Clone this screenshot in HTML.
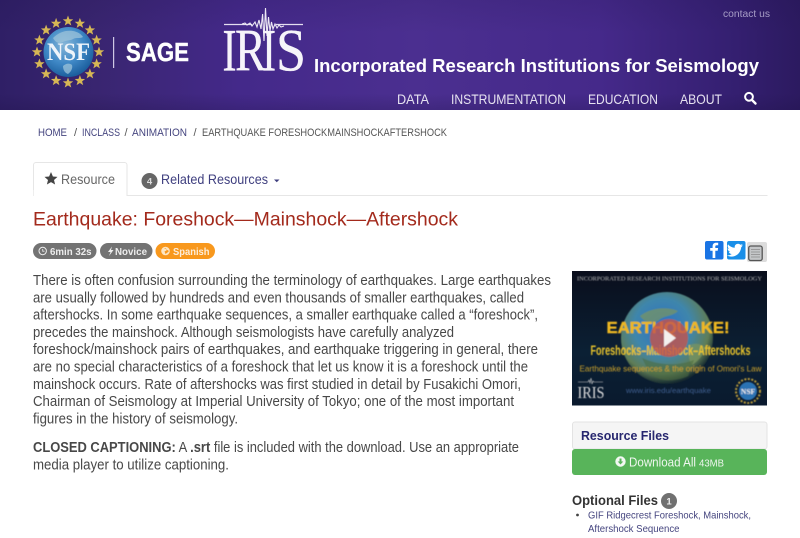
<!DOCTYPE html>
<html><head><meta charset="utf-8"><title>Earthquake: Foreshock—Mainshock—Aftershock</title>
<style>
html,body{margin:0;padding:0;background:#fff;width:800px;height:538px;overflow:hidden}
svg{display:block}
text{font-family:"Liberation Sans",sans-serif}
.b{font-size:14.4px;fill:#484848}
.l{fill:#45457f}
.bc{font-size:11px}
</style></head><body>
<svg xmlns="http://www.w3.org/2000/svg" width="800" height="538" viewBox="0 0 800 538">
<defs>
<linearGradient id="h" x1="0" x2="1" y1="0" y2="0">
<stop offset="0" stop-color="#2f1f66"/><stop offset=".12" stop-color="#392570"/><stop offset=".3" stop-color="#44298a"/><stop offset=".52" stop-color="#4b2f90"/><stop offset=".75" stop-color="#45298a"/><stop offset=".92" stop-color="#341f70"/><stop offset="1" stop-color="#2c1a60"/>
</linearGradient>
<linearGradient id="hv" x1="0" x2="0" y1="0" y2="1">
<stop offset="0" stop-color="#1a0f40" stop-opacity=".12"/><stop offset=".3" stop-color="#1a0f40" stop-opacity="0"/><stop offset=".85" stop-color="#1a0f40" stop-opacity="0"/><stop offset="1" stop-color="#1a0f40" stop-opacity=".22"/>
</linearGradient>
<radialGradient id="g" cx=".42" cy=".35" r=".75">
<stop offset="0" stop-color="#86b6d8"/><stop offset=".5" stop-color="#3f88c6"/><stop offset="1" stop-color="#10508f"/>
</radialGradient>
<radialGradient id="e" cx=".45" cy=".38" r=".62">
<stop offset="0" stop-color="#2a6fc6"/><stop offset=".5" stop-color="#3f86ab"/><stop offset=".82" stop-color="#5f7d56"/><stop offset="1" stop-color="#14282f"/>
</radialGradient>
<linearGradient id="sky" x1="0" x2="0" y1="0" y2="1">
<stop offset="0" stop-color="#0a0e1c"/><stop offset=".6" stop-color="#0b2034"/><stop offset="1" stop-color="#0a1a2e"/>
</linearGradient>
<clipPath id="tc"><rect x="572" y="271" width="195" height="134.500"/></clipPath>
<polygon id="st" points="0,-5.500 1.400,-1.700 5.200,-1.600 2.200,.8 3.300,4.500 0,2.400 -3.300,4.500 -2.200,.8 -5.200,-1.600 -1.400,-1.700" fill="#d6b755"/>
<filter id="soft" x="-5%" y="-5%" width="110%" height="110%"><feGaussianBlur stdDeviation=".45"/></filter>
<filter id="soft2" x="-5%" y="-5%" width="110%" height="110%"><feGaussianBlur stdDeviation=".3"/></filter>
</defs>
<rect width="800" height="538" fill="#fff"/>
<rect width="800" height="110" fill="url(#h)"/>
<rect width="800" height="110" fill="url(#hv)"/>

<!-- NSF -->
<g filter="url(#soft2)">
<use href="#st" transform="translate(68 21)"/><use href="#st" transform="translate(79.900 23.400)"/><use href="#st" transform="translate(89.900 30.100)"/><use href="#st" transform="translate(96.600 40.100)"/><use href="#st" transform="translate(99 52)"/><use href="#st" transform="translate(96.600 63.900)"/><use href="#st" transform="translate(89.900 73.900)"/><use href="#st" transform="translate(79.900 80.600)"/><use href="#st" transform="translate(68 83)"/><use href="#st" transform="translate(56.100 80.600)"/><use href="#st" transform="translate(46.100 73.900)"/><use href="#st" transform="translate(39.400 63.900)"/><use href="#st" transform="translate(37 52)"/><use href="#st" transform="translate(39.400 40.100)"/><use href="#st" transform="translate(46.100 30.100)"/><use href="#st" transform="translate(56.100 23.400)"/>
<circle cx="68.500" cy="52" r="25" fill="url(#g)"/>
<path d="M53 38c6-6 13-8 20-7 5 1 8 3 10 6-4 2-6 0-10 2-3 2-7 1-10 3-4 2-7 1-10-4zM63 66c3-3 7-3 9-1 1 3-1 7-4 9-3-1-5-4-5-8z" fill="#9cc3d9" opacity=".75"/>
<text x="47" y="60" textLength="43" lengthAdjust="spacingAndGlyphs" style="font-family:'Liberation Serif',serif;font-size:25px;font-weight:bold" fill="#eef4fa">NSF</text>
</g>
<rect x="113" y="37" width="1.200" height="31" fill="#cfc8e4"/>
<text x="126" y="61" textLength="63" lengthAdjust="spacingAndGlyphs" style="font-size:25.500px;font-weight:bold" fill="#fff" stroke="#fff" stroke-width=".4">SAGE</text>

<!-- IRIS -->
<path d="M224 24.500H252M276 24.500H303" stroke="#e4def0" stroke-width="1.200" fill="none"/>
<path d="M242 24l3-1 2 2 3-2 2 3 3-4 2 5 2-7 2 9 1.600-15 1.400 27 1.500-33 1.500 28 1.500-19 1.500 14 1.500-9 1.500 7 2-5 2 4 2-3 2 2 3-1" stroke="#ece8f4" stroke-width="1.100" fill="none"/>
<g style="font-size:60px" fill="#f6f4fa" stroke="#f6f4fa" stroke-width=".35">
<text x="222.500" y="70.500" textLength="14" lengthAdjust="spacingAndGlyphs" style="font-family:'Liberation Serif',serif">I</text>
<text x="235" y="70.500" textLength="31" lengthAdjust="spacingAndGlyphs" style="font-family:'Liberation Serif',serif">R</text>
<text x="262" y="70.500" textLength="14" lengthAdjust="spacingAndGlyphs" style="font-family:'Liberation Serif',serif">I</text>
<text x="276" y="70.500" textLength="30" lengthAdjust="spacingAndGlyphs" style="font-family:'Liberation Serif',serif">S</text>
</g>

<text x="723" y="17" textLength="47" lengthAdjust="spacingAndGlyphs" style="font-size:10.500px" fill="#a79dc6">contact us</text>
<text x="314" y="72" textLength="445" lengthAdjust="spacingAndGlyphs" style="font-size:18.200px;font-weight:bold" fill="#fff">Incorporated Research Institutions for Seismology</text>
<g style="font-size:14px" fill="#e6e2f0">
<text x="397" y="104" textLength="32" lengthAdjust="spacingAndGlyphs">DATA</text>
<text x="451" y="104" textLength="115" lengthAdjust="spacingAndGlyphs">INSTRUMENTATION</text>
<text x="588" y="104" textLength="70" lengthAdjust="spacingAndGlyphs">EDUCATION</text>
<text x="680" y="104" textLength="42" lengthAdjust="spacingAndGlyphs">ABOUT</text>
</g>
<circle cx="749" cy="96.800" r="3.900" fill="none" stroke="#fff" stroke-width="2"/>
<path d="M752 100l3.500 3.500" stroke="#fff" stroke-width="2.400" stroke-linecap="round"/>

<!-- breadcrumb -->
<g class="bc">
<text class="l" x="38" y="136" textLength="29" lengthAdjust="spacingAndGlyphs">HOME</text>
<text x="74" y="136" fill="#555">/</text>
<text class="l" x="82" y="136" textLength="38" lengthAdjust="spacingAndGlyphs">INCLASS</text>
<text x="124.500" y="136" fill="#555">/</text>
<text class="l" x="132" y="136" textLength="55" lengthAdjust="spacingAndGlyphs">ANIMATION</text>
<text x="193.500" y="136" fill="#555">/</text>
<text x="202" y="136" textLength="245" lengthAdjust="spacingAndGlyphs" fill="#555">EARTHQUAKE FORESHOCKMAINSHOCKAFTERSHOCK</text>
</g>

<!-- tabs -->
<path d="M33.500 196V165a2.500 2.500 0 0 1 2.500-2.500H124.500a2.500 2.500 0 0 1 2.500 2.500V195.500H767.500" fill="none" stroke="#e6e6e6"/>
<rect x="34" y="190" width="92.500" height="8" fill="#fff"/>
<path d="M33.500 190V196" stroke="#eee"/>
<polygon points="51,172 52.900,176.500 57.500,176.900 54,180 55.100,184.500 51,182.100 46.900,184.500 48,180 44.500,176.900 49.100,176.500" fill="#444"/>
<text x="61" y="184" textLength="54" lengthAdjust="spacingAndGlyphs" style="font-size:13.800px" fill="#666">Resource</text>
<circle cx="149.500" cy="181" r="8" fill="#666"/>
<text x="149.500" y="184.500" text-anchor="middle" style="font-size:9.500px;font-weight:bold" fill="#ddd">4</text>
<text x="161" y="184" textLength="107" lengthAdjust="spacingAndGlyphs" style="font-size:13.800px" fill="#3f3f7f">Related Resources</text>
<polygon points="274,179.500 279.500,179.500 276.750,182.300" fill="#3f3f7f"/>

<text x="33" y="225.500" textLength="425" lengthAdjust="spacingAndGlyphs" style="font-size:19px" fill="#a32a1c">Earthquake: Foreshock—Mainshock—Aftershock</text>

<!-- badges -->
<rect x="33" y="243" width="63.500" height="16" rx="8" fill="#737373"/>
<circle cx="42.700" cy="251" r="3.700" fill="none" stroke="#eee" stroke-width="1"/><path d="M42.700 249v2.200h1.800" stroke="#eee" fill="none" stroke-width=".8"/>
<text x="50" y="255" textLength="41.500" lengthAdjust="spacingAndGlyphs" style="font-size:10.500px;font-weight:bold" fill="#eee">6min 32s</text>
<rect x="100" y="243" width="52.500" height="16" rx="8" fill="#737373"/>
<polygon points="112,246.500 108,252 110.500,252 109,256 113.500,250 111,250" fill="#eee"/>
<text x="115" y="255" textLength="32" lengthAdjust="spacingAndGlyphs" style="font-size:10.500px;font-weight:bold" fill="#eee">Novice</text>
<rect x="155.500" y="243" width="59.500" height="16" rx="8" fill="#f8981d"/>
<circle cx="165.500" cy="251" r="4.300" fill="#fde6c4"/><path d="M164 248c2 0 3 1 2.500 2.500l-2 1 1 2.500 2-1.500 1.500-1.500" fill="#f8981d"/>
<text x="173" y="255" textLength="36.500" lengthAdjust="spacingAndGlyphs" style="font-size:10.500px;font-weight:bold" fill="#fdeedb">Spanish</text>

<!-- share -->
<rect x="705" y="241" width="18.500" height="18.500" rx="2" fill="#1a74e4"/>
<path d="M715.300 258v-7.300h2.400l.4-2.700h-2.800v-1.500c0-.8.3-1.300 1.400-1.300h1.500v-2.400c-.3 0-1.200-.1-2.100-.1-2.100 0-3.500 1.200-3.500 3.500V248h-2.400v2.700h2.400v7.300z" fill="#fff"/>
<rect x="727" y="241" width="18.500" height="18.500" rx="2" fill="#1a8fe8"/>
<path d="M743 245.300c-.6.300-1.200.4-1.900.5.700-.4 1.200-1 1.400-1.800-.6.400-1.300.6-2.100.8a3.300 3.300 0 0 0-5.600 3c-2.700-.1-5.100-1.400-6.700-3.400-.9 1.500-.4 3.400 1 4.400-.5 0-1-.2-1.500-.4 0 1.600 1.100 2.900 2.600 3.200-.5.100-1 .2-1.500.1.400 1.300 1.600 2.200 3 2.300-1.400 1.100-3.100 1.500-4.800 1.400 4.300 2.800 12.700 1.200 14.300-7.700v-.5c.6-.5 1.300-1.200 1.800-1.900z" fill="#fff"/>
<rect x="747" y="242" width="20" height="20" rx="2" fill="#dcdcdc"/>
<rect x="748.700" y="246" width="13.500" height="14.500" rx="2" fill="#c4c6c8" stroke="#555" stroke-width="1.300"/>
<path d="M751 249.500h9M751 252h9M751 254.500h9M751 257h9" stroke="#8a8a8a" stroke-width=".8"/>

<!-- body -->
<g class="b">
<text x="33" y="285" textLength="518" lengthAdjust="spacingAndGlyphs">There is often confusion surrounding the terminology of earthquakes. Large earthquakes</text>
<text x="33" y="302.300" textLength="491" lengthAdjust="spacingAndGlyphs">are usually followed by hundreds and even thousands of smaller earthquakes, called</text>
<text x="33" y="319.600" textLength="505" lengthAdjust="spacingAndGlyphs">aftershocks. In some earthquake sequences, a smaller earthquake called a “foreshock”,</text>
<text x="33" y="336.900" textLength="421" lengthAdjust="spacingAndGlyphs">precedes the mainshock. Although seismologists have carefully analyzed</text>
<text x="33" y="354.200" textLength="505" lengthAdjust="spacingAndGlyphs">foreshock/mainshock pairs of earthquakes, and earthquake triggering in general, there</text>
<text x="33" y="371.500" textLength="495" lengthAdjust="spacingAndGlyphs">are no special characteristics of a foreshock that let us know it is a foreshock until the</text>
<text x="33" y="388.800" textLength="488" lengthAdjust="spacingAndGlyphs">mainshock occurs. Rate of aftershocks was first studied in detail by Fusakichi Omori,</text>
<text x="33" y="406.100" textLength="481" lengthAdjust="spacingAndGlyphs">Chairman of Seismology at Imperial University of Tokyo; one of the most important</text>
<text x="33" y="423.400" textLength="205" lengthAdjust="spacingAndGlyphs">figures in the history of seismology.</text>
<text x="33" y="452" textLength="486" lengthAdjust="spacingAndGlyphs"><tspan font-weight="bold">CLOSED CAPTIONING:</tspan> A <tspan font-weight="bold">.srt</tspan> file is included with the download. Use an appropriate</text>
<text x="33" y="469.300" textLength="196" lengthAdjust="spacingAndGlyphs">media player to utilize captioning.</text>
</g>

<!-- thumbnail -->
<rect x="572" y="271" width="195" height="134.500" fill="url(#sky)"/>
<g clip-path="url(#tc)"><g filter="url(#soft)">
<circle cx="667" cy="338" r="46" fill="url(#e)"/>
<path d="M640 316c10-8 26-10 38-5-6 6-14 4-20 10-7 2-13 2-18-5zM690 345c7-3 13 0 15 3-2 8-7 13-13 17-4-6-4-13-2-20z" fill="#7a9560" opacity=".7"/>
<path d="M642 358c18 8 36 8 52 2l-6 16c-14 6-28 6-38-2z" fill="#4a6a3f" opacity=".55"/>
<text x="577" y="280.500" textLength="185" lengthAdjust="spacingAndGlyphs" style="font-family:'Liberation Serif',serif;font-size:6.500px" fill="#b8b8b8">INCORPORATED RESEARCH INSTITUTIONS FOR SEISMOLOGY</text>
<text x="606.500" y="333" textLength="123" lengthAdjust="spacingAndGlyphs" style="font-size:15.500px;font-weight:bold" fill="#eeb820" stroke="#eeb820" stroke-width=".4">EARTHQUAKE!</text>
<text x="590.500" y="355" textLength="160" lengthAdjust="spacingAndGlyphs" style="font-size:14px;font-weight:bold" fill="#e9c42c">Foreshocks–Mainshock–Aftershocks</text>
<text x="579.500" y="371.500" textLength="182" lengthAdjust="spacingAndGlyphs" style="font-size:8.500px" fill="#c9a02c">Earthquake sequences &amp; the origin of Omori's Law</text>
<circle cx="669" cy="338" r="19" fill="#c4544c" opacity=".8"/>
<polygon points="664,329 664,347 676,338" fill="#f4f0ee"/>
<text x="626" y="393" textLength="85" lengthAdjust="spacingAndGlyphs" style="font-size:7.500px" fill="#3f5f90">www.iris.edu/earthquake</text>
<text x="577.500" y="398" textLength="27" lengthAdjust="spacingAndGlyphs" style="font-family:'Liberation Serif',serif;font-size:17px" fill="#ddd">IRIS</text>
<path d="M578 382h10l1-2 1 3 1-5 1 6 1-3 1 1h9" stroke="#ccc" stroke-width=".6" fill="none"/>
<circle cx="748" cy="391" r="12" fill="none" stroke="#b99b3a" stroke-width="2" stroke-dasharray="2 1.500"/>
<circle cx="748" cy="391" r="9" fill="#2b72b3"/>
<text x="748" y="394" text-anchor="middle" style="font-family:'Liberation Serif',serif;font-size:7.500px;font-weight:bold" fill="#eee">NSF</text>
</g></g>

<!-- resource files -->
<rect x="572.500" y="422" width="194.500" height="27" rx="2.500" fill="#f5f5f5" stroke="#e3e3e3"/>
<text x="581" y="440" textLength="88" lengthAdjust="spacingAndGlyphs" style="font-size:13px;font-weight:bold" fill="#27276f">Resource Files</text>
<rect x="572" y="449" width="195" height="26" rx="3" fill="#58b45a"/>
<circle cx="620.500" cy="461.500" r="5.200" fill="#f2f8f2"/>
<path d="M619.500 458.500h2v3h1.800l-2.800 3-2.800-3h1.800z" fill="#58b45a"/>
<text x="629" y="466.500" textLength="67" lengthAdjust="spacingAndGlyphs" style="font-size:12.500px" fill="#eef6ee">Download All</text>
<text x="699" y="466.500" textLength="25" lengthAdjust="spacingAndGlyphs" style="font-size:10px" fill="#eef6ee">43MB</text>

<text x="572" y="505" textLength="86" lengthAdjust="spacingAndGlyphs" style="font-size:13.500px;font-weight:bold" fill="#333">Optional Files</text>
<circle cx="669" cy="501" r="8" fill="#707070"/>
<text x="669" y="504.500" text-anchor="middle" style="font-size:9.500px;font-weight:bold" fill="#eee">1</text>
<circle cx="577.500" cy="515" r="1.400" fill="#444"/>
<text x="588" y="518.500" textLength="163" lengthAdjust="spacingAndGlyphs" style="font-size:10.500px" fill="#45457f">GIF Ridgecrest Foreshock, Mainshock,</text>
<text x="588" y="531.800" textLength="91.500" lengthAdjust="spacingAndGlyphs" style="font-size:10.500px" fill="#45457f">Aftershock Sequence</text>
</svg>
</body></html>
